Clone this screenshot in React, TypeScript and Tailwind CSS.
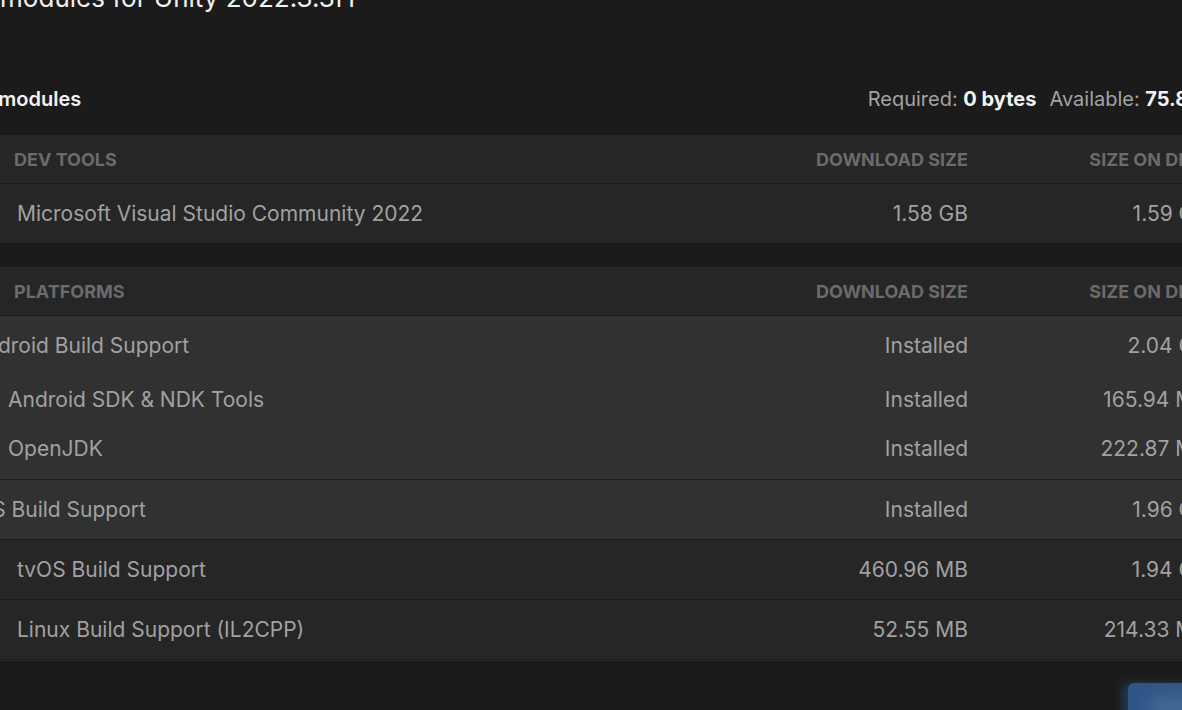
import React from "react";

type Row = { name: string; dl: string; disk: string; pl: string; h: string };

function Header({ label }: { label: string }) {
  return (
    <div className="flex h-[49px] items-center border-b border-[#1c1c1c] bg-[#262626] pr-[26px] text-[18px] font-bold uppercase text-[#6b6b6b]">
      <div className="flex-1 pl-[60px]">{label}</div>
      <div className="w-[200px] text-right">Download size</div>
      <div className="w-[240px] text-right">Size on disk</div>
    </div>
  );
}

function Line({ r }: { r: Row }) {
  return (
    <div className={`flex items-center pr-[26px] text-[21px] text-[#a1a1a1] ${r.h}`}>
      <div className={`flex-1 ${r.pl}`}>{r.name}</div>
      <div className="w-[200px] text-right">{r.dl}</div>
      <div className="w-[240px] text-right">{r.disk}</div>
    </div>
  );
}

export default function App() {
  return (
    <div className="relative h-[710px] w-[1182px] overflow-hidden bg-[#1b1b1b] font-['Inter','Noto_Sans',sans-serif]">
      <div className="ml-[-46px] w-[1280px]">
        <div className="mt-[-19px] ml-[-11px] text-[26px] leading-[34px] text-[#f2f2f2]">
          Add modules for Unity 2022.3.3f1
        </div>
        <div className="mt-[70px] flex h-[28px] items-baseline justify-between text-[20px] leading-[28px]">
          <div className="font-semibold text-[#f2f2f2]">Add modules</div>
          <div className="text-[#a3a3a3]">
            Required: <span className="font-bold text-[#f2f2f2]">0 bytes</span>
            <span className="ml-[13px]">Available: </span>
            <span className="font-bold text-[#f2f2f2]">75.85 GB</span>
          </div>
        </div>

        <div className="mt-[22px]">
          <Header label="Dev tools" />
          <div className="bg-[#262626]">
            <Line r={{ name: "Microsoft Visual Studio Community 2022", dl: "1.58 GB", disk: "1.59 GB", pl: "pl-[63px]", h: "h-[59px]" }} />
          </div>
        </div>

        <div className="mt-[24px]">
          <Header label="Platforms" />
          <div className="border-b border-[#1c1c1c] bg-[#313131] pb-[6px]">
            <Line r={{ name: "Android Build Support", dl: "Installed", disk: "2.04 GB", pl: "pl-[17px]", h: "h-[59px]" }} />
            <Line r={{ name: "Android SDK & NDK Tools", dl: "Installed", disk: "165.94 MB", pl: "pl-[54px]", h: "h-[49px]" }} />
            <Line r={{ name: "OpenJDK", dl: "Installed", disk: "222.87 MB", pl: "pl-[54px]", h: "h-[49px]" }} />
          </div>
          <div className="border-b border-[#1c1c1c] bg-[#313131]">
            <Line r={{ name: "iOS Build Support", dl: "Installed", disk: "1.96 GB", pl: "pl-[17px]", h: "h-[59px]" }} />
          </div>
          <div className="border-b border-[#1c1c1c] bg-[#262626]">
            <Line r={{ name: "tvOS Build Support", dl: "460.96 MB", disk: "1.94 GB", pl: "pl-[63px]", h: "h-[59px]" }} />
          </div>
          <div className="border-b border-[#1c1c1c] bg-[#262626]">
            <Line r={{ name: "Linux Build Support (IL2CPP)", dl: "52.55 MB", disk: "214.33 MB", pl: "pl-[63px]", h: "h-[59px]" }} />
          </div>
          <div className="h-px bg-[#2c2c2c]" />
        </div>

        <div className="mt-[22px] flex justify-end">
          <div className="relative h-[44px] w-[106px] overflow-hidden rounded-[6px] bg-[#2f5687] shadow-[-6px_0_10px_rgba(47,86,135,0.5)]">
            <div className="absolute left-[20px] top-[14px] h-[24px] w-[60px] rounded-full bg-[#5577a0] opacity-60 blur-[8px]" />
          </div>
        </div>
      </div>
    </div>
  );
}
